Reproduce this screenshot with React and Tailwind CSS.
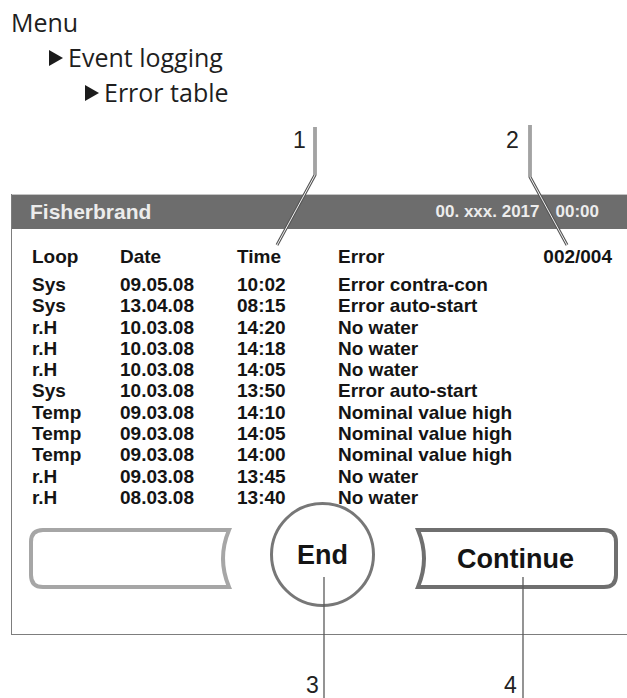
import React from 'react';

const rows = [
  ['Sys', '09.05.08', '10:02', 'Error contra-con'],
  ['Sys', '13.04.08', '08:15', 'Error auto-start'],
  ['r.H', '10.03.08', '14:20', 'No water'],
  ['r.H', '10.03.08', '14:18', 'No water'],
  ['r.H', '10.03.08', '14:05', 'No water'],
  ['Sys', '10.03.08', '13:50', 'Error auto-start'],
  ['Temp', '09.03.08', '14:10', 'Nominal value high'],
  ['Temp', '09.03.08', '14:05', 'Nominal value high'],
  ['Temp', '09.03.08', '14:00', 'Nominal value high'],
  ['r.H', '09.03.08', '13:45', 'No water'],
  ['r.H', '08.03.08', '13:40', 'No water'],
];

function Arrow() {
  return (
    <svg width="14" height="16" viewBox="0 0 14 16" className="shrink-0">
      <polygon points="0,0 14,8 0,16" fill="#1c1c1c" />
    </svg>
  );
}

export default function App() {
  return (
    <div className="relative w-[627px] h-[698px] overflow-hidden bg-white font-['Liberation_Sans',Arial,sans-serif] text-[#141414]">
      {/* Menu path */}
      <div className="pl-[11px] pt-[5px] font-['Open_Sans',sans-serif] text-[25px] leading-[35px] text-[#1e1e1e]">
        <div>Menu</div>
        <div className="flex items-center gap-[5px] ml-[38px]">
          <Arrow />
          <span>Event logging</span>
        </div>
        <div className="flex items-center gap-[5px] ml-[74px]">
          <Arrow />
          <span>Error table</span>
        </div>
      </div>

      {/* Device screen */}
      <div className="mt-[84px] ml-[11px] w-[616px] border-l border-b border-[#7d7d7d]">
        <div className="h-[35px] bg-[#6d6d6d] border-t border-[#c4c4c4] flex items-center justify-between pl-[18px] pr-[28px] font-bold text-[#ececec]">
          <span className="text-[21px]">Fisherbrand</span>
          <div className="flex gap-[16px] text-[17px]">
            <span>00. xxx. 2017</span>
            <span>00:00</span>
          </div>
        </div>

        <div className="pt-[17px] pl-[20px] pr-[15px] font-bold text-[19px]">
          <div className="grid grid-cols-[88px_117px_101px_1fr_auto] leading-[21px] mb-[7px]">
            <span>Loop</span>
            <span>Date</span>
            <span>Time</span>
            <span>Error</span>
            <span>002/004</span>
          </div>
          {rows.map((r, i) => (
            <div key={i} className="grid grid-cols-[88px_117px_101px_1fr] leading-[21.3px]">
              <span>{r[0]}</span>
              <span>{r[1]}</span>
              <span>{r[2]}</span>
              <span>{r[3]}</span>
            </div>
          ))}
        </div>

        <div className="flex items-start h-[106px] mt-[-6px] mb-[26px] pl-[17px] font-bold">
          <div className="relative w-[204px] h-[61px] mt-[26px]">
            <svg width="204" height="61" viewBox="0 0 204 61" className="absolute inset-0">
              <path d="M200 2 L14 2 Q2 2 2 14 L2 47 Q2 59 14 59 L200 59 Q188 30.5 200 2 Z" fill="white" stroke="#a6a6a6" strokeWidth="4" />
            </svg>
          </div>
          <div className="ml-[37px] w-[105px] h-[105px] rounded-full border-[3px] border-[#777777] flex items-center justify-center text-[27px]">
            End
          </div>
          <div className="relative ml-[38px] w-[205px] h-[61px] mt-[26px] flex items-center justify-center text-[27px]">
            <svg width="205" height="61" viewBox="0 0 205 61" className="absolute inset-0">
              <path d="M5 2 L191 2 Q203 2 203 14 L203 47 Q203 59 191 59 L5 59 Q17 30.5 5 2 Z" fill="white" stroke="#6f6f6f" strokeWidth="4" />
            </svg>
            <span className="relative">Continue</span>
          </div>
        </div>
      </div>

      {/* Callouts */}
      <svg width="627" height="698" className="absolute inset-0 pointer-events-none">
        <g fill="none" strokeLinejoin="round">
          <polyline points="315,127 315,175 277,245" stroke="#555" strokeWidth="3" />
          <polyline points="315,127 315,175 277,245" stroke="#f2f2f2" strokeWidth="1" />
          <polyline points="530,125 530,177 567,245" stroke="#555" strokeWidth="3" />
          <polyline points="530,125 530,177 567,245" stroke="#f2f2f2" strokeWidth="1" />
        </g>
        <g stroke="#5a5a5a" strokeWidth="1.3">
          <line x1="324" y1="577" x2="324" y2="698" />
          <line x1="523" y1="577" x2="523" y2="698" />
        </g>
      </svg>
      <span className="absolute left-[293px] top-[129px] text-[23px] leading-[23px] text-[#222]">1</span>
      <span className="absolute left-[506px] top-[129px] text-[23px] leading-[23px] text-[#222]">2</span>
      <span className="absolute left-[306px] top-[674px] text-[23px] leading-[23px] text-[#222]">3</span>
      <span className="absolute left-[504px] top-[674px] text-[23px] leading-[23px] text-[#222]">4</span>
    </div>
  );
}
